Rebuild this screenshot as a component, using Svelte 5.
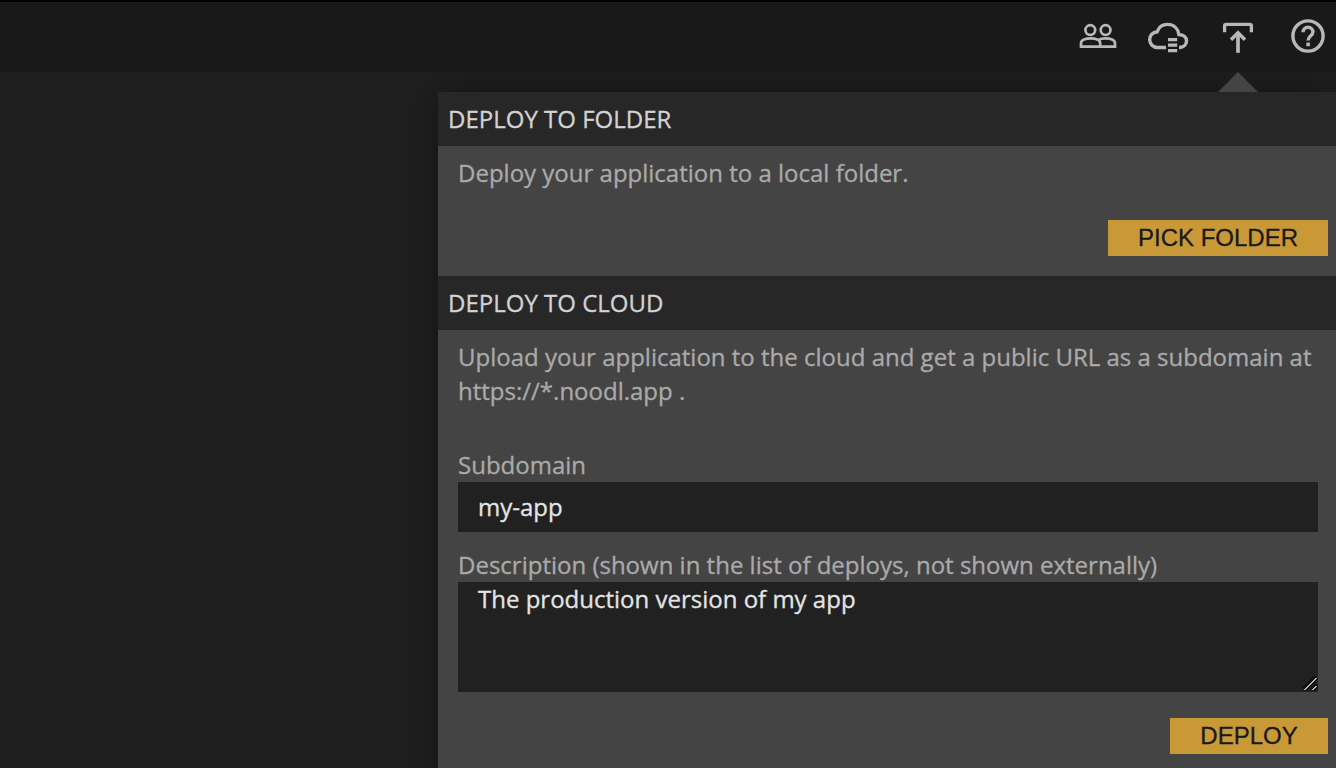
<script>
  let subdomain = $state('my-app');
  let description = $state('The production version of my app');
</script>

<div class="app">
  <header class="topbar">
    <button class="tool" aria-label="Collaborators">
      <svg width="48" height="48" viewBox="1074 12 48 48">
        <g fill="none" stroke="#b8b8b8" stroke-width="2.7">
          <circle cx="1090.3" cy="30.1" r="4.900" />
          <circle cx="1105.6" cy="30.1" r="4.900" />
          <path d="M1081 46.600v-3.400c0-3.400 5-4.900 9.600-4.900s9.600 1.500 9.600 4.900v3.400z" />
          <path d="M1098.300 40c1.800-1.200 4.800-1.700 7.300-1.700 4.600 0 9.400 1.500 9.400 4.900v3.400h-14.900" />
        </g>
      </svg>
    </button>
    <button class="tool" aria-label="Cloud services">
      <svg width="48" height="48" viewBox="1144 12 48 48">
        <path
          d="M1166 47.500h-8.500c-4.300 0-7.800-3.500-7.800-7.800 0-4.300 3.100-7.500 7.500-8 1.500-4.300 5.400-7.300 10.400-7.300 6 0 10.400 4.100 11.300 10.100 4.500.2 7.600 2.700 7.600 6.600 0 3.500-2.900 6.300-6.800 6.400h-.7"
          fill="none" stroke="#b8b8b8" stroke-width="3.400"
        />
        <path d="M1168 38h9.200v3.300h-9.200zM1168 43.400h9.200v3.300h-9.200zM1168 48.900h9.200v3.300h-9.200z" fill="#b8b8b8" />
      </svg>
    </button>
    <button class="tool" aria-label="Deploy">
      <svg width="48" height="48" viewBox="1214 12 48 48">
        <g fill="none" stroke="#b8b8b8" stroke-width="3.300">
          <path d="M1224.600 32.300v-6.300q0-1.600 1.600-1.600h23.600q1.600 0 1.600 1.600v6.300" />
          <path d="M1238 52.800v-20" stroke-width="3.700" />
          <path d="M1231 39.700l7-7 7 7" stroke-width="3.500" />
        </g>
      </svg>
      <span class="pointer"></span>
    </button>
    <button class="tool" aria-label="Help">
      <svg width="48" height="48" viewBox="1284 12 48 48">
        <circle cx="1308" cy="36" r="15.100" fill="none" stroke="#b8b8b8" stroke-width="3.400" />
        <path
          d="M1303.100 32.200c0-2.900 2.100-4.900 4.900-4.900s4.900 2 4.900 4.600c0 3.800-4.800 4-4.800 8.700"
          fill="none" stroke="#b8b8b8" stroke-width="3.400"
        />
        <path d="M1306.300 42.600h3.600v3.600h-3.600z" fill="#b8b8b8" />
      </svg>
    </button>
  </header>

  <main class="workspace">
    <section class="popup">
      <h2>DEPLOY TO FOLDER</h2>
      <div class="section folder">
        <p>Deploy your application to a local folder.</p>
        <div class="actions"><button class="action pick">PICK FOLDER</button></div>
      </div>

      <h2>DEPLOY TO CLOUD</h2>
      <div class="section cloud">
        <p>Upload your application to the cloud and get a public URL as a subdomain at<br />https://*.noodl.app .</p>
        <label for="subdomain">Subdomain</label>
        <input id="subdomain" bind:value={subdomain} spellcheck="false" />
        <label for="description">Description (shown in the list of deploys, not shown externally)</label>
        <div class="area">
          <textarea id="description" bind:value={description} spellcheck="false"></textarea>
          <svg class="grip" width="16" height="16" viewBox="0 0 16 16" shape-rendering="crispEdges">
            <path d="M2 13.500L14.500 1M10 14L15 9" stroke="#111" stroke-width="5" />
            <path d="M2.500 14L14.500 2M10.500 14L14.500 10" stroke="#b4b4b4" stroke-width="2" />
          </svg>
        </div>
        <div class="actions"><button class="action deploy">DEPLOY</button></div>
      </div>
    </section>
  </main>
</div>

<style>
  :global(body) { margin: 0; overflow: hidden; background: #1f1f1f; }
  .app {
    box-sizing: border-box;
    width: 1336px;
    height: 768px;
    overflow: hidden;
    display: flex;
    flex-direction: column;
    background: #1f1f1f;
    font-family: "Open Sans", sans-serif;
    font-size: 24px;
    -webkit-text-stroke: 0.3px;
  }
  button { margin: 0; padding: 0; border: 0; background: none; }
  .topbar {
    position: relative;
    z-index: 2;
    box-sizing: border-box;
    height: 72px;
    flex: none;
    display: flex;
    justify-content: flex-end;
    align-items: flex-start;
    gap: 22px;
    padding: 10px 4px 0 0;
    border-top: 2px solid #000;
    background: #191919;
  }
  .tool { position: relative; width: 48px; height: 48px; }
  .tool svg { display: block; }
  .pointer {
    position: absolute;
    left: 4px;
    top: 60px;
    border: 20px solid transparent;
    border-top: 0;
    border-bottom-color: #444;
  }
  .workspace { flex: 1; display: flex; justify-content: flex-end; padding-top: 20px; }
  .popup {
    width: 898px;
    height: 700px;
    background: #444;
    box-shadow: 0 0 40px rgba(0, 0, 0, 0.38);
  }
  h2 {
    margin: 0;
    height: 54px;
    line-height: 54px;
    padding-left: 10px;
    background: #272727;
    color: #d3d3d3;
    font-size: 24px;
    font-weight: 400;
  }
  .section { display: flex; flex-direction: column; padding: 10px 18px 0 20px; color: #aaa; }
  p { margin: 0; line-height: 34px; white-space: nowrap; }
  .folder { height: 120px; }
  .folder .actions { margin-top: 30px; }
  .cloud p { margin-bottom: 40px; }
  label { height: 34px; line-height: 34px; white-space: nowrap; }
  input, textarea {
    box-sizing: border-box;
    display: block;
    width: 860px;
    margin: 0;
    border: 0;
    border-radius: 0;
    outline: 0;
    background: #212121;
    color: #e4e4e4;
    font: 24px "Open Sans", sans-serif;
  }
  input { height: 50px; padding: 0 20px 2px; margin-bottom: 16px; }
  .area { position: relative; height: 110px; }
  textarea { height: 110px; padding: 0 20px; line-height: 34px; resize: none; }
  .grip { position: absolute; right: 0; bottom: 0; }
  .actions { display: flex; justify-content: flex-end; margin-right: -10px; }
  .cloud .actions { margin-top: 26px; }
  .action {
    height: 36px;
    background: #c99937;
    color: #191919;
    font: 24px "Liberation Sans", Arial, sans-serif;
  }
  .pick { width: 220px; }
  .deploy { width: 158px; }
</style>
